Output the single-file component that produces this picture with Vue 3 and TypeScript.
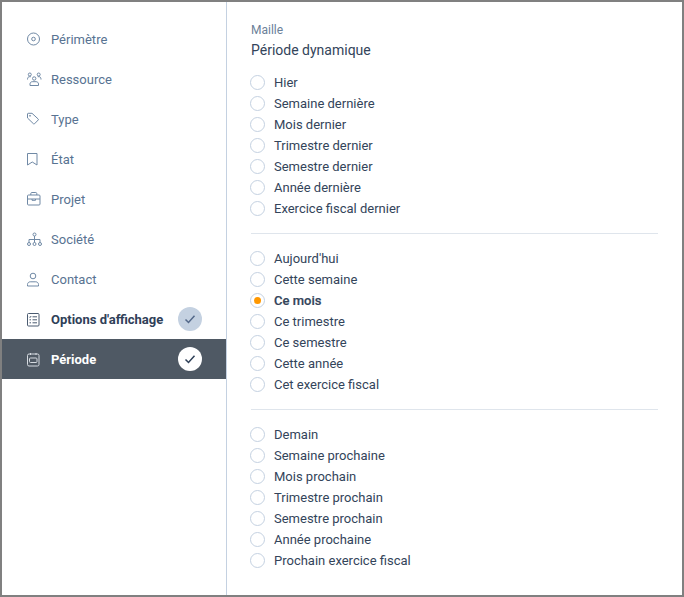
<script setup lang="ts">
interface NavItem { label: string; icon: string; bold?: boolean; active?: boolean; check?: boolean }
const nav: NavItem[] = [
  { label: 'Périmètre', icon: 'target' },
  { label: 'Ressource', icon: 'people' },
  { label: 'Type', icon: 'tag' },
  { label: 'État', icon: 'bookmark' },
  { label: 'Projet', icon: 'briefcase' },
  { label: 'Société', icon: 'org' },
  { label: 'Contact', icon: 'user' },
  { label: "Options d'affichage", icon: 'list', bold: true, check: true },
  { label: 'Période', icon: 'calendar', bold: true, active: true, check: true },
]
const groups: string[][] = [
  ['Hier', 'Semaine dernière', 'Mois dernier', 'Trimestre dernier', 'Semestre dernier', 'Année dernière', 'Exercice fiscal dernier'],
  ["Aujourd'hui", 'Cette semaine', 'Ce mois', 'Ce trimestre', 'Ce semestre', 'Cette année', 'Cet exercice fiscal'],
  ['Demain', 'Semaine prochaine', 'Mois prochain', 'Trimestre prochain', 'Semestre prochain', 'Année prochaine', 'Prochain exercice fiscal'],
]
const selected = 'Ce mois'
</script>

<template>
  <div class="frame">
    <aside class="side">
      <div
        v-for="item in nav"
        :key="item.label"
        class="nav"
        :class="{ bold: item.bold, active: item.active }"
      >
        <svg class="ico" width="16" height="16" viewBox="0 0 16 16" fill="none" stroke="currentColor" stroke-width="1">
          <template v-if="item.icon === 'target'">
            <circle cx="7.5" cy="8" r="6" />
            <circle cx="7.5" cy="8" r="1.800" />
          </template>
          <template v-else-if="item.icon === 'people'">
            <circle cx="3.800" cy="3.500" r="1.500" />
            <circle cx="12.700" cy="3.500" r="1.500" />
            <circle cx="8.200" cy="7.500" r="1.700" />
            <path d="M1.500 8.500c0-2 .8-2.800 2-2.800h1.300M15 8.500c0-2-.8-2.800-2-2.800h-1.300" />
            <path d="M4 14.500v-1.500c0-1.300 1-2.300 2.200-2.300h4c1.300 0 2.300 1 2.300 2.300v1.500z" />
          </template>
          <template v-else-if="item.icon === 'tag'">
            <path d="M1.500 3c0-.4.300-.7.700-.7h3.800l6.200 5.700c.3.300.3.700 0 1l-3.700 3.800c-.3.300-.7.300-1 0L1.500 7z" />
            <circle cx="4" cy="4.800" r=".5" />
          </template>
          <template v-else-if="item.icon === 'bookmark'">
            <path d="M1.500 2.500h9.500V14L6.250 11 1.500 14z" />
          </template>
          <template v-else-if="item.icon === 'briefcase'">
            <rect x="1.500" y="4" width="12.500" height="10" rx="1" />
            <path d="M4.800 4V2.500c0-.5.400-1 1-1h4c.6 0 1 .5 1 1V4M1.500 8h12.500M6 8v1.300h3.500V8" />
          </template>
          <template v-else-if="item.icon === 'org'">
            <circle cx="8.500" cy="3.500" r="1.500" />
            <circle cx="3" cy="13" r="1.500" />
            <circle cx="8.500" cy="13" r="1.500" />
            <circle cx="14" cy="13" r="1.500" />
            <path d="M8.500 5v6.500M3 11.500V8.500h11v3" />
          </template>
          <template v-else-if="item.icon === 'user'">
            <circle cx="7" cy="5" r="2.800" />
            <path d="M1.500 15v-1.500c0-1.600 1.300-2.700 2.700-2.700h5.600c1.400 0 2.700 1.100 2.700 2.700V15z" />
          </template>
          <template v-else-if="item.icon === 'list'">
            <rect x="1.500" y="2.500" width="11.500" height="12.500" rx="1" />
            <path d="M6.500 5.800h4.500M6.500 8.800h4.500M6.500 11.800h4.500M3.300 5.800l.7.7L5.200 5M3.500 8.800h1.500M3.500 11.800h1.500" />
          </template>
          <template v-else>
            <path d="M4.500 2v2M10 2v2" />
            <rect x="1.500" y="3" width="11.500" height="12" rx="1.500" />
            <rect x="3.500" y="7" width="7.500" height="4.500" rx="1" />
          </template>
        </svg>
        <span class="nav-label">{{ item.label }}</span>
        <span v-if="item.check" class="badge">
          <svg width="12" height="12" viewBox="0 0 12 12" fill="none" stroke="currentColor" stroke-width="1.500">
            <path d="M1.500 6.500 4.500 9.500 10.500 2.800" />
          </svg>
        </span>
      </div>
    </aside>
    <main class="main">
      <div class="caption">Maille</div>
      <div class="title">Période dynamique</div>
      <div v-for="(group, i) in groups" :key="i" class="group">
        <label v-for="opt in group" :key="opt" class="opt" :class="{ on: opt === selected }">
          <span class="radio"><span v-if="opt === selected" class="dot"></span></span>
          <span>{{ opt }}</span>
        </label>
      </div>
    </main>
  </div>
</template>

<style>
html, body { margin: 0; background: #fff; }
</style>

<style scoped>
.frame {
  box-sizing: border-box;
  width: 684px;
  height: 597px;
  border: 2px solid #808080;
  display: flex;
  background: #fff;
  font-family: Roboto, "Liberation Sans", sans-serif;
  overflow: hidden;
}
.side {
  box-sizing: border-box;
  width: 225px;
  flex: none;
  padding-top: 17px;
  border-right: 1px solid #c4d1e1;
}
.nav {
  height: 40px;
  display: flex;
  align-items: center;
  padding: 0 24px;
  font-size: 13px;
  color: #587392;
}
.ico { flex: none; color: #7089a5; }
.nav-label { margin-left: 9px; flex: 1; }
.nav.bold { color: #2f4058; font-weight: 700; }
.nav.bold .ico { color: #4a5b70; }
.nav.active { background: #4f5964; color: #fff; }
.nav.active .ico { color: #d5dae0; }
.badge {
  width: 24px;
  height: 24px;
  border-radius: 50%;
  background: #c4d1e1;
  color: #54698a;
  display: flex;
  align-items: center;
  justify-content: center;
  margin-top: -1px;
}
.active .badge { background: #fff; color: #2f4058; }
.main {
  flex: 1;
  padding: 21px 24px 0 24px;
  color: #33445a;
}
.caption {
  font-size: 12px;
  line-height: 14px;
  color: #6b8199;
}
.title {
  font-size: 14px;
  line-height: 20px;
  margin-top: 3px;
}
.group {
  display: flex;
  flex-direction: column;
  padding: 14px 0;
  border-bottom: 1px solid #dfe5ec;
}
.title + .group { padding-top: 12px; }
.group:last-child { border-bottom: 0; }
.opt {
  height: 21px;
  display: flex;
  align-items: center;
  gap: 9px;
  margin-left: -1px;
  font-size: 13px;
}
.opt.on { font-weight: 500; -webkit-text-stroke: 0.2px currentColor; }
.radio {
  box-sizing: border-box;
  width: 15px;
  height: 15px;
  border: 1px solid #c4d1e1;
  border-radius: 50%;
  display: flex;
  align-items: center;
  justify-content: center;
  flex: none;
}
.dot {
  width: 7px;
  height: 7px;
  border-radius: 50%;
  background: #ff9800;
}
</style>
